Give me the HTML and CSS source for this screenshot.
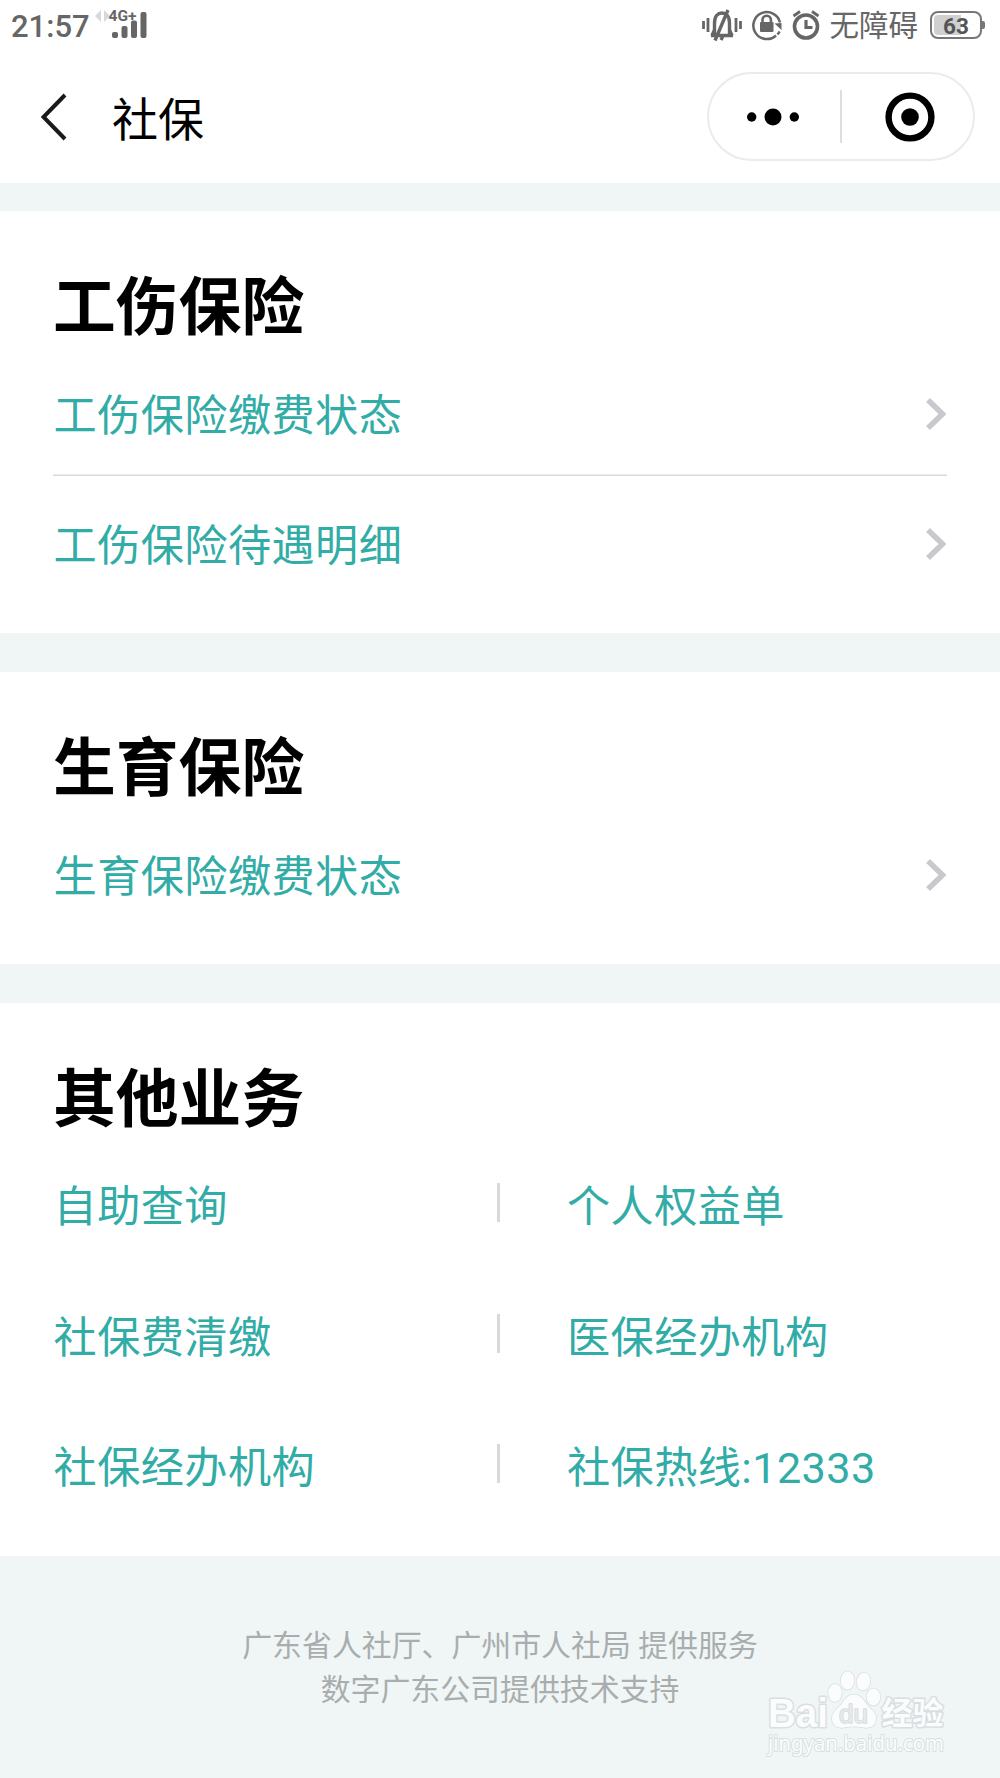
FILE: index.html
```html
<!DOCTYPE html>
<html lang="zh-CN">
<head>
<meta charset="utf-8">
<title>社保</title>
<link rel="stylesheet" href="styles.css">
</head>
<body>
<header class="top">
  <div class="status">
    <span class="time">21:57</span>
    <svg class="signal" width="54" height="32" viewBox="0 0 54 32">
      <path d="M6 4v12L0 10zM9 4v12l6-6z" fill="#d8d8d8"/>
      <text class="net" x="13.500" y="15" textLength="28" lengthAdjust="spacingAndGlyphs">4G+</text>
      <g fill="#666"><rect x="17" y="26" width="6" height="6" rx="2"/><rect x="26.500" y="20" width="6" height="12" rx="2"/><rect x="36" y="14.500" width="6" height="17.500" rx="2"/><rect x="45.500" y="6" width="6" height="26" rx="2"/></g>
    </svg>
    <svg class="bell" width="40" height="34" viewBox="0 0 40 34" fill="none" stroke="#666">
      <path d="M1.500 13v8M6 10v14M34 10v14M38.500 13v8" stroke-width="2.800"/>
      <path d="M9 27.500h22M12.500 26V15c0-7 3.500-10 7.500-10s7.500 3 7.500 10v11M26 2 13 32.500M21 28l-2 4" stroke-width="3.400"/>
      <path d="M12.500 21 9.500 27.500M27.500 21l3 6.500" stroke-width="2.500"/>
    </svg>
    <svg class="lock" width="30" height="32" viewBox="0 0 30 32" fill="none" stroke="#666">
      <path d="M24 26.500A13.500 13.500 0 1 1 28 13.500" stroke-width="2.500"/>
      <path d="M22.500 14.500 29.500 14v7z" fill="#666" stroke="none"/>
      <path d="M27.800 22.500 25.500 25.500" stroke-width="2.300"/>
      <path d="M10.500 14v-3a4.200 4.200 0 0 1 8.400 0v3" stroke-width="2.600"/>
      <rect x="8" y="13" width="13.500" height="10" rx="1" fill="#666" stroke="none"/>
    </svg>
    <svg class="alarm" width="28" height="32" viewBox="0 0 28 32" fill="none" stroke="#666">
      <circle cx="14" cy="17.500" r="11.500" stroke-width="3.600"/>
      <path d="M14 11v7.500h6.500" stroke-width="3.200"/>
      <path d="M1.500 7 8 2.500M26.500 7 20 2.500" stroke-width="2.800"/>
    </svg>
    <span class="mode">无障碍</span>
    <span class="battery"><span class="level">63</span></span>
  </div>
  <nav class="nav">
    <svg class="back" width="26" height="48" viewBox="0 0 26 48" fill="none" stroke="#1a1a1a" stroke-width="4"><path d="M24 2 2.500 24 24 46"/></svg>
    <h1 class="page-title">社保</h1>
    <div class="capsule">
      <svg class="dots" width="52" height="18" viewBox="0 0 52 18"><circle cx="4.700" cy="9" r="4.700"/><circle cx="26" cy="9" r="8.500"/><circle cx="47.300" cy="9" r="4.700"/></svg>
      <span class="split"></span>
      <svg class="target" width="50" height="50" viewBox="0 0 50 50"><circle cx="25" cy="25" r="21.400" fill="none" stroke="#000" stroke-width="6.400"/><circle cx="25" cy="25" r="8.800"/></svg>
    </div>
  </nav>
</header>
<main class="content">
  <section class="card">
    <h2 class="heading">工伤保险</h2>
    <a class="row"><span class="label">工伤保险缴费状态</span><svg class="chevron" width="20" height="32" viewBox="0 0 20 32"><path d="M2 2 16.500 16 2 30"/></svg></a>
    <a class="row"><span class="label">工伤保险待遇明细</span><svg class="chevron" width="20" height="32" viewBox="0 0 20 32"><path d="M2 2 16.500 16 2 30"/></svg></a>
  </section>
  <section class="card">
    <h2 class="heading">生育保险</h2>
    <a class="row"><span class="label">生育保险缴费状态</span><svg class="chevron" width="20" height="32" viewBox="0 0 20 32"><path d="M2 2 16.500 16 2 30"/></svg></a>
  </section>
  <section class="card">
    <h2 class="heading">其他业务</h2>
    <div class="pair"><a class="label">自助查询</a><i class="bar"></i><a class="label">个人权益单</a></div>
    <div class="pair"><a class="label">社保费清缴</a><i class="bar"></i><a class="label">医保经办机构</a></div>
    <div class="pair"><a class="label">社保经办机构</a><i class="bar"></i><a class="label">社保热线:12333</a></div>
  </section>
</main>
<footer class="footer">
  <p class="credit">广东省人社厅、广州市人社局 提供服务</p>
  <p class="credit">数字广东公司提供技术支持</p>
  <svg class="watermark" width="184" height="92" viewBox="0 0 184 92">
    <g class="mark">
      <text class="wm-bai" x="2" y="56.500" textLength="60" lengthAdjust="spacingAndGlyphs">Bai</text>
      <ellipse cx="69" cy="23" rx="6.800" ry="9"/><ellipse cx="81.500" cy="10.500" rx="6.800" ry="9.300"/><ellipse cx="97.500" cy="11.500" rx="6.800" ry="9" transform="rotate(10 97.500 11.500)"/><ellipse cx="107.500" cy="27" rx="6.800" ry="8.500"/>
      <path d="M88 24.500c6 0 9 4 12 9 4 6 10 8 10 14 0 8-5 11-12 10-7-1.500-13-1.500-20 0-7 1-12-2-12-9 0-7 6-10 10-15 3-5 6-9 12-9z"/>
      <text class="wm-du" x="73" y="52.500" textLength="29" lengthAdjust="spacingAndGlyphs">du</text>
      <text class="wm-cn" x="115.500" y="54" textLength="62">经验</text>
      <text class="wm-url" x="2" y="80.500" textLength="176" lengthAdjust="spacingAndGlyphs">jingyan.baidu.com</text>
    </g>
  </svg>
</footer>
</body>
</html>
```
FILE: styles.css
```css
* { box-sizing: border-box; }
body {
  margin: 0;
  background: #f0f6f6;
  color: #000;
  font-family: Roboto, "Noto Sans CJK SC", sans-serif;
}
h1, h2, p { margin: 0; }
svg { display: block; flex: none; }

.top { height: 183px; background: #fff; }
.status {
  display: flex;
  align-items: center;
  height: 50px;
  padding: 0 14px 0 11px;
  color: #666;
}
.time { width: 84px; padding-top: 3px; font-size: 31px; font-weight: 500; line-height: 50px; }
.net { font: 700 15px Roboto, sans-serif; fill: #666; }
.signal { align-self: flex-end; margin-bottom: 12px; }
.bell { margin-left: auto; }
.lock { margin-left: 10px; }
.alarm { margin-left: 10px; }
.mode { margin-left: 9px; padding-top: 1px; font-size: 29.5px; line-height: 50px; white-space: nowrap; }
.battery {
  position: relative;
  width: 52px;
  height: 28px;
  margin-left: 12px;
  margin-right: 4px;
  padding: 2px;
  border: 2px solid #777;
  border-radius: 8px;
}
.battery::after {
  content: "";
  position: absolute;
  right: -5px;
  top: 8px;
  width: 3px;
  height: 8px;
  border-radius: 0 2px 2px 0;
  background: #777;
}
.level {
  display: block;
  height: 20px;
  border-radius: 4px;
  background: linear-gradient(90deg, #d0d0d0 62%, transparent 62%);
  color: #555;
  font-size: 22.5px;
  font-weight: 700;
  line-height: 22px;
  text-align: center;
}
.nav { display: flex; align-items: center; height: 133px; padding: 0 25px 0 41px; }
.back { width: 26px; }
.page-title { margin: 6px 0 0 45px; font-size: 46px; font-weight: 400; line-height: 60px; }
.capsule {
  display: flex;
  align-items: center;
  width: 268px;
  height: 89px;
  margin-left: auto;
  padding-left: 38px;
  border: 2px solid #ebebeb;
  border-radius: 45px;
}
.split { width: 2px; height: 53px; margin-left: 41px; background: #dedede; }
.target { margin-left: 42.5px; }

.content { display: flex; flex-direction: column; gap: 39px; padding-top: 28px; }
.card { padding: 51px 53px 27px; background: #fff; }
.heading { height: 83px; font-size: 62.8px; font-weight: 700; line-height: 91px; }
.row { display: flex; align-items: center; justify-content: space-between; height: 131px; }
.row + .row { height: 130px; box-shadow: 0 -1.5px #d9dadb; }
.label { padding: 12px 0 0 0.6px; color: #31aca6; font-size: 43.2px; letter-spacing: 0.4px; line-height: 60px; white-space: nowrap; }
.chevron { margin: 6px 1px 0 0; fill: none; stroke: #c8c8cd; stroke-width: 5.5; }
.pair { display: grid; grid-template-columns: 444px 3px 1fr; align-items: center; height: 130.6px; }
.bar { height: 39px; margin-top: 1px; background: #d9d9d9; }
.pair .label:last-child { padding-left: 67px; }

.footer { position: relative; height: 222px; padding-top: 68px; text-align: center; }
.credit { color: #a9adad; font-size: 29.9px; line-height: 44.5px; }
.watermark { position: absolute; left: 766px; top: 114px; }
.mark { fill: #fafcfe; stroke: #d9dee0; stroke-width: 1.5px; paint-order: stroke; stroke-linejoin: round; }
.wm-bai { font: 700 40px "Liberation Sans", sans-serif; stroke-width: 3px; }
.wm-du { font: 400 25px "Liberation Sans", sans-serif; fill: #e6eaec; stroke: #d3d8da; stroke-width: 1.5px; }
.wm-cn { font: 700 31px "Noto Sans CJK SC", sans-serif; stroke-width: 3px; }
.wm-url { font: 400 21px "Noto Sans", sans-serif; stroke-width: 2px; }
```
